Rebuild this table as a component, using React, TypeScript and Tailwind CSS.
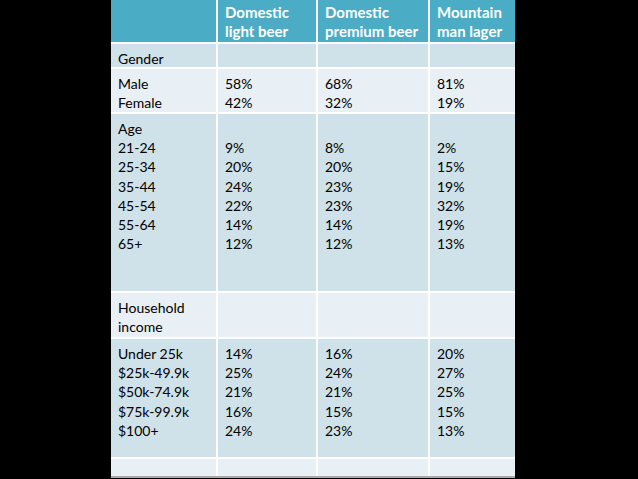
const columns = ['Domestic light beer', 'Domestic premium beer', 'Mountain man lager'];

type Row = {
  label: string[];
  values: string[][];
  height: string;
  tone: 'dark' | 'light';
};

const rows: Row[] = [
  { label: ['Gender'], values: [[], [], []], height: 'h-[23px]', tone: 'dark' },
  {
    label: ['Male', 'Female'],
    values: [['58%', '42%'], ['68%', '32%'], ['81%', '19%']],
    height: 'h-[43px]',
    tone: 'light',
  },
  {
    label: ['Age', '21-24', '25-34', '35-44', '45-54', '55-64', '65+'],
    values: [
      ['', '9%', '20%', '24%', '22%', '14%', '12%'],
      ['', '8%', '20%', '23%', '23%', '14%', '12%'],
      ['', '2%', '15%', '19%', '32%', '19%', '13%'],
    ],
    height: 'h-[177px]',
    tone: 'dark',
  },
  { label: ['Household', 'income'], values: [[], [], []], height: 'h-[44px]', tone: 'light' },
  {
    label: ['Under 25k', '$25k-49.9k', '$50k-74.9k', '$75k-99.9k', '$100+'],
    values: [
      ['14%', '25%', '21%', '16%', '24%'],
      ['16%', '24%', '21%', '15%', '23%'],
      ['20%', '27%', '25%', '15%', '13%'],
    ],
    height: 'h-[118px]',
    tone: 'dark',
  },
  { label: [], values: [[], [], []], height: 'h-[17px]', tone: 'light' },
];

function Cell({ lines, tone, height }: { lines: string[]; tone: 'dark' | 'light'; height: string }) {
  return (
    <div
      className={`${height} px-[7px] pt-[5px] text-[14px] leading-[19.2px] text-black ${
        tone === 'dark' ? 'bg-[#d0e2e9]' : 'bg-[#e8eff5]'
      }`}
    >
      {lines.map((l, i) => (
        <div key={i} className="h-[19.2px] whitespace-nowrap">
          {l}
        </div>
      ))}
    </div>
  );
}

export default function App() {
  return (
    <div className="flex h-[479px] w-[638px] bg-black pl-[111px]" style={{ fontFamily: 'Lato, "Open Sans", sans-serif' }}>
      <div className="w-[404px] self-start border-b-2 border-[#a9a9a9] bg-white">
        <div className="grid grid-cols-[105px_98px_110px_85px] gap-[2px]">
          {/* header */}
          <div className="h-[42px] bg-[#4aacc5]" />
          {columns.map((c) => (
            <div
              key={c}
              className="h-[42px] bg-[#4aacc5] px-[7px] pt-[3px] text-[15px] font-bold leading-[19px] text-white"
            >
              {c.split(' ')[0]}
              <br />
              {c.split(' ').slice(1).join(' ')}
            </div>
          ))}

          {rows.map((r, ri) => (
            <div key={ri} className="contents">
              <Cell lines={r.label} tone={r.tone} height={r.height} />
              {r.values.map((v, vi) => (
                <Cell key={vi} lines={v} tone={r.tone} height={r.height} />
              ))}
            </div>
          ))}
        </div>
      </div>
    </div>
  );
}
